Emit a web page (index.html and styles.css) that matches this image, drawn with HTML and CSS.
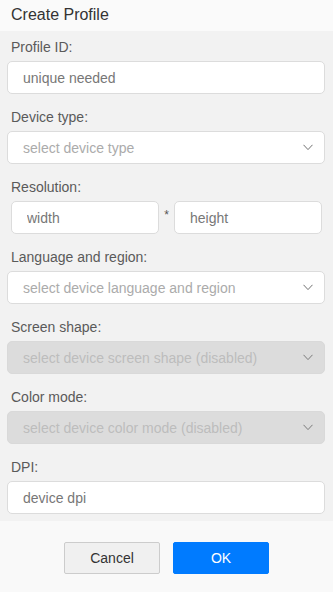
FILE: index.html
```html
<!DOCTYPE html>
<html>
<head>
<meta charset="utf-8">
<title>Create Profile</title>
<link rel="stylesheet" href="styles.css">
</head>
<body>
<div class="dialog">
  <div class="header">Create Profile</div>
  <div class="content">
    <div class="field">
      <label class="label">Profile ID:</label>
      <input class="input" type="text" placeholder="unique needed">
    </div>
    <div class="field">
      <label class="label">Device type:</label>
      <div class="select"><span class="select-text">select device type</span><svg class="chev" width="10" height="7" viewBox="0 0 10 7"><path d="M0.5 0.8 L5 5.6 L9.5 0.8" fill="none" stroke="#707070" stroke-width="1"/></svg></div>
    </div>
    <div class="field">
      <label class="label">Resolution:</label>
      <div class="res-row">
        <input class="input res-input" type="text" placeholder="width">
        <span class="star">*</span>
        <input class="input res-input" type="text" placeholder="height">
      </div>
    </div>
    <div class="field">
      <label class="label">Language and region:</label>
      <div class="select"><span class="select-text">select device language and region</span><svg class="chev" width="10" height="7" viewBox="0 0 10 7"><path d="M0.5 0.8 L5 5.6 L9.5 0.8" fill="none" stroke="#707070" stroke-width="1"/></svg></div>
    </div>
    <div class="field">
      <label class="label">Screen shape:</label>
      <div class="select disabled"><span class="select-text">select device screen shape (disabled)</span><svg class="chev" width="10" height="7" viewBox="0 0 10 7"><path d="M0.5 0.8 L5 5.6 L9.5 0.8" fill="none" stroke="#7a7a7a" stroke-width="1"/></svg></div>
    </div>
    <div class="field">
      <label class="label">Color mode:</label>
      <div class="select disabled"><span class="select-text">select device color mode (disabled)</span><svg class="chev" width="10" height="7" viewBox="0 0 10 7"><path d="M0.5 0.8 L5 5.6 L9.5 0.8" fill="none" stroke="#7a7a7a" stroke-width="1"/></svg></div>
    </div>
    <div class="field last">
      <label class="label">DPI:</label>
      <input class="input" type="text" placeholder="device dpi">
    </div>
  </div>
  <div class="footer">
    <button class="btn btn-cancel">Cancel</button>
    <button class="btn btn-ok">OK</button>
  </div>
</div>
</body>
</html>
```

FILE: styles.css
```css
* {
  box-sizing: border-box;
}
html, body {
  margin: 0;
  padding: 0;
  background: #f9f9f9;
}
body {
  font-family: "Liberation Sans", Arial, sans-serif;
  color: #333;
}
.dialog {
  width: 333px;
  height: 592px;
  display: flex;
  flex-direction: column;
  background: #f9f9f9;
}
.header {
  height: 31px;
  line-height: 30px;
  padding-left: 11px;
  font-size: 16px;
  color: #333;
  background: #fafafa;
}
.content {
  background: #f2f2f2;
  padding: 6px 8px 7px 7px;
  display: flex;
  flex-direction: column;
  gap: 13px;
}
.field {
  display: flex;
  flex-direction: column;
}
.label {
  display: block;
  height: 20px;
  line-height: 20px;
  margin-bottom: 4px;
  padding-left: 4px;
  font-size: 14px;
  color: #5a5a5a;
}
.input {
  height: 33px;
  width: 100%;
  border: 1px solid #dcdcdc;
  border-radius: 5px;
  background: #fff;
  padding: 0 0 0 15px;
  font-family: "Liberation Sans", Arial, sans-serif;
  font-size: 14px;
  color: #333;
  outline: none;
}
.input::placeholder {
  color: #777;
  opacity: 1;
}
.select {
  height: 33px;
  border: 1px solid #dcdcdc;
  border-radius: 5px;
  background: #fff;
  padding: 0 11px 0 15px;
  display: flex;
  align-items: center;
  justify-content: space-between;
  font-size: 14px;
}
.select-text {
  color: #ababab;
}
.select.disabled {
  background: #dcdcdc;
  border-color: #d9d9d9;
}
.select.disabled .select-text {
  color: #bdbdbd;
}
.chev {
  display: block;
}
.res-row {
  display: flex;
  align-items: center;
  padding: 0 3px 0 4px;
}
.res-input {
  flex: 1;
  width: auto;
  min-width: 0;
  padding-left: 15px;
}
.star {
  width: 15px;
  text-align: center;
  font-size: 12px;
  color: #555;
  align-self: flex-start;
  margin-top: 7px;
}
.footer {
  flex: 1;
  background: #f9f9f9;
  display: flex;
  justify-content: center;
  align-items: flex-start;
  gap: 13px;
  padding-top: 21px;
}
.btn {
  width: 96px;
  height: 32px;
  border-radius: 2px;
  font-family: "Liberation Sans", Arial, sans-serif;
  font-size: 14px;
  cursor: pointer;
}
.btn-cancel {
  background: #f0f0f0;
  border: 1px solid #cccccc;
  color: #333;
}
.btn-ok {
  background: #007bff;
  border: 1px solid #007bff;
  color: #fff;
}
```
